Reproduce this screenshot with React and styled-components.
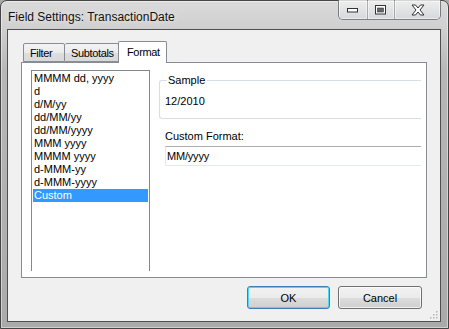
import React from 'react';
import styled, { createGlobalStyle } from 'styled-components';

const Global = createGlobalStyle`
  html, body { margin: 0; padding: 0; background: #a8a8a8; }
  body { font-family: "Liberation Sans", Arial, sans-serif; font-size: 11px; color: #000; }
  * { box-sizing: border-box; }
`;

const Window = styled.div`
  position: relative;
  width: 449px;
  height: 329px;
  display: flex;
  flex-direction: column;
  padding: 0 7px 6px 6px;
  border: 1px solid #454545;
  border-radius: 7px 7px 0 0;
  background: linear-gradient(180deg, #dadada 0px, #d0d0d0 26px, #b7b7b7 70px, #aaaaaa 100%);
  box-shadow: inset 0 0 0 1px rgba(255, 255, 255, 0.45);
`;

const TitleBar = styled.div`
  height: 28px;
  display: flex;
  justify-content: space-between;
  align-items: flex-start;
`;

const Title = styled.div`
  margin: 10px 0 0 1px;
  font-size: 12px;
  line-height: 12px;
  color: #111;
  text-shadow: 0 0 6px rgba(255, 255, 255, 0.9);
`;

const Caption = styled.div`
  display: flex;
  height: 20px;
  margin-top: -1px;
  border: 1px solid rgba(40, 40, 40, 0.55);
  border-top: none;
  border-radius: 0 0 5px 5px;
  overflow: hidden;
  background: linear-gradient(180deg, rgba(255,255,255,0.55), rgba(215,220,225,0.6));
`;

const CapBtn = styled.div`
  width: ${p => p.$w}px;
  height: 100%;
  display: flex;
  align-items: center;
  justify-content: center;
  border-left: ${p => (p.$first ? 'none' : '1px solid rgba(60,60,60,0.35)')};
  box-shadow: inset 0 0 0 1px rgba(255, 255, 255, 0.5);
`;

const Client = styled.div`
  position: relative;
  flex: 1;
  display: flex;
  flex-direction: column;
  padding: 11px 13px 0 13px;
  background: #f0f0f0;
  border: 1px solid #4f4f4f;
`;

const TabStrip = styled.div`
  display: flex;
  align-items: flex-end;
  height: 21px;
  padding-left: 2px;
  position: relative;
  z-index: 1;
`;

const Tab = styled.div`
  width: ${p => p.$w}px;
  height: ${p => (p.$active ? 22 : 19)}px;
  margin-bottom: ${p => (p.$active ? -1 : 0)}px;
  margin-left: ${p => (p.$active ? -1 : 0)}px;
  padding: ${p => (p.$active ? '4px 0 0 8px' : '3px 0 0 6px')};
  border: 1px solid #898c95;
  border-bottom: ${p => (p.$active ? 'none' : '1px solid #898c95')};
  border-left: ${p => (p.$first || p.$active ? '1px solid #898c95' : 'none')};
  border-radius: 2px 2px 0 0;
  background: ${p => (p.$active ? '#fff' : 'linear-gradient(180deg, #f3f3f3 0%, #ebebeb 50%, #dedede 51%, #d9d9d9 100%)')};
  font-size: 11px;
  letter-spacing: -0.35px;
  line-height: 13px;
  white-space: nowrap;
  overflow: hidden;
`;

const Panel = styled.div`
  height: 216px;
  display: flex;
  align-items: flex-start;
  padding: 7px 0 0 9px;
  background: #fff;
  border: 1px solid #898c95;
  overflow: hidden;
`;

const ListBox = styled.div`
  width: 119px;
  height: 201px;
  flex: none;
  padding: 1px 0 0 0;
  border: 1px solid #828790;
  border-bottom: none;
`;

const Item = styled.div`
  height: 13px;
  line-height: 13px;
  margin: 0 1px;
  padding-left: 1px;
  white-space: nowrap;
  background: ${p => (p.$selected ? '#3399ff' : 'transparent')};
  color: ${p => (p.$selected ? '#fff' : '#000')};
`;

const Column = styled.div`
  width: 262px;
  margin: 10px 0 0 9px;
  display: flex;
  flex-direction: column;
`;

const Group = styled.div`
  position: relative;
  height: 39px;
  padding: 14px 0 0 5px;
  border: 1px solid #d5dfe5;
  border-right: none;
  border-radius: 3px 0 0 3px;
  line-height: 13px;
`;

const Legend = styled.span`
  position: absolute;
  top: -7px;
  left: 7px;
  padding: 0 2px 0 1px;
  background: #fff;
  line-height: 13px;
`;

const Label = styled.div`
  margin: 11px 0 0 6px;
  line-height: 13px;
`;

const TextBox = styled.div`
  height: 20px;
  margin: 3px 0 0 6px;
  padding: 3px 0 0 1px;
  border: 1px solid #e3e9ef;
  border-top-color: #abadb3;
  border-right: none;
  line-height: 13px;
  letter-spacing: -0.2px;
`;

const Buttons = styled.div`
  display: flex;
  justify-content: flex-end;
  gap: 8px;
  margin: 8px 5px 0 0;
`;

const Button = styled.button`
  width: ${p => p.$w}px;
  height: 23px;
  padding: 0;
  font-family: "Liberation Sans", Arial, sans-serif;
  font-size: 11px;
  color: #000;
  border: 1px solid ${p => (p.$default ? '#3c7fb1' : '#707070')};
  border-radius: 3px;
  background: linear-gradient(180deg, #f2f2f2 0%, #ebebeb 50%, #dddddd 50%, #cfcfcf 100%);
  box-shadow: inset 0 0 0 1px ${p => (p.$default ? '#48d8fb' : 'rgba(255,255,255,0.7)')};
`;

const Grip = styled.svg`
  position: absolute;
  right: 2px;
  bottom: 2px;
`;

const items = ['MMMM dd, yyyy', 'd', 'd/M/yy', 'dd/MM/yy', 'dd/MM/yyyy', 'MMM yyyy', 'MMMM yyyy', 'd-MMM-yy', 'd-MMM-yyyy', 'Custom'];

export default function App() {
  return (
    <>
      <Global />
      <Window>
        <TitleBar>
          <Title>Field Settings: TransactionDate</Title>
          <Caption>
            <CapBtn $w={28} $first>
              <svg width="12" height="6" viewBox="0 0 12 6">
                <rect x="0.5" y="1.5" width="10" height="3.5" fill="#fff" stroke="#333" />
              </svg>
            </CapBtn>
            <CapBtn $w={27}>
              <svg width="12" height="10" viewBox="0 0 12 10">
                <rect x="0.5" y="0.5" width="10" height="8.5" fill="#fff" stroke="#333" />
                <rect x="2.5" y="3" width="6" height="4" fill="#666" stroke="#333" strokeWidth="0.6" />
              </svg>
            </CapBtn>
            <CapBtn $w={46}>
              <svg width="14" height="12" viewBox="0 0 14 12">
                <path d="M1 1h3.5L7 4l2.5-3H13L9 6l4 5H9.5L7 8l-2.5 3H1l4-5z" fill="#fff" stroke="#333" strokeWidth="1" strokeLinejoin="round" />
              </svg>
            </CapBtn>
          </Caption>
        </TitleBar>
        <Client>
          <TabStrip>
            <Tab $w={42} $first>Filter</Tab>
            <Tab $w={54}>Subtotals</Tab>
            <Tab $w={49} $active>Format</Tab>
          </TabStrip>
          <Panel>
            <ListBox>
              {items.map(t => (
                <Item key={t} $selected={t === 'Custom'}>{t}</Item>
              ))}
            </ListBox>
            <Column>
              <Group>
                <Legend>Sample</Legend>
                12/2010
              </Group>
              <Label>Custom Format:</Label>
              <TextBox>MM/yyyy</TextBox>
            </Column>
          </Panel>
          <Buttons>
            <Button $w={83} $default>OK</Button>
            <Button $w={84}>Cancel</Button>
          </Buttons>
          <Grip width="9" height="9" viewBox="0 0 9 9">
            {[[7, 1], [4, 4], [7, 4], [1, 7], [4, 7], [7, 7]].map(([x, y]) => (
              <rect key={`${x}-${y}`} x={x} y={y} width="1.5" height="1.5" fill="#b5b5b5" />
            ))}
          </Grip>
        </Client>
      </Window>
    </>
  );
}
